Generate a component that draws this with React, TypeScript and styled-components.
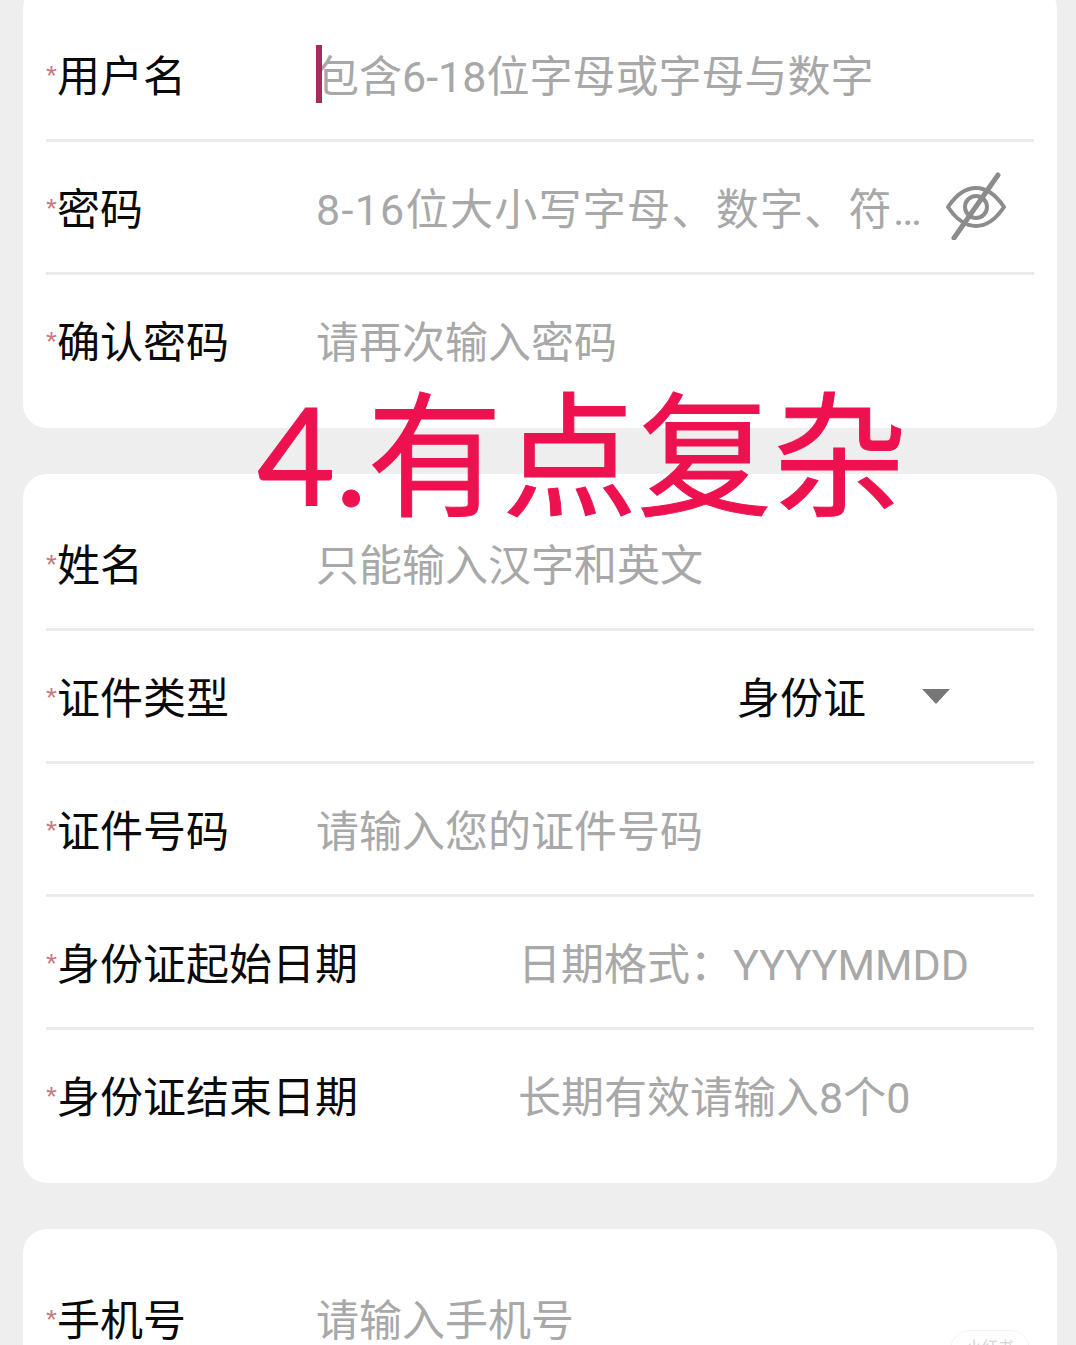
import styled, { createGlobalStyle } from "styled-components";

const GlobalStyle = createGlobalStyle`
  html, body {
    margin: 0;
    padding: 0;
    background: #eeeeee;
  }
  body {
    font-family: "Roboto", "Noto Sans CJK SC", sans-serif;
  }
`;

const Page = styled.div`
  position: relative;
  width: 1076px;
  height: 1345px;
  overflow: hidden;
  background: #eeeeee;
`;

const Stack = styled.main`
  display: flex;
  flex-direction: column;
  gap: 46px;
  margin-top: -15px;
  padding: 0 19px 0 23px;
`;

const Card = styled.section`
  background: #ffffff;
  border-radius: 24px;
  padding: 24px 23px 20px;
`;

const Row = styled.div<{ $last?: boolean }>`
  position: relative;
  display: flex;
  align-items: center;
  height: 133px;
  box-sizing: border-box;
  border-bottom: 3px solid ${(p) => (p.$last ? "transparent" : "#ebebeb")};
`;

const Label = styled.label<{ $wide?: boolean }>`
  display: flex;
  align-items: center;
  flex: 0 0 ${(p) => (p.$wide ? "474px" : "272px")};
  padding-bottom: 2px;
  font-size: 43px;
  color: #0a0a0a;
  white-space: nowrap;
`;

const Star = styled.span`
  width: 11px;
  margin-top: 6px;
  font-family: "Liberation Sans", sans-serif;
  font-size: 28px;
  color: #c9787f;
`;

const Field = styled.input<{ $spaced?: boolean }>`
  flex: 1;
  min-width: 0;
  border: 0;
  outline: 0;
  padding: 6px 0 0;
  margin-left: -2px;
  background: transparent;
  font-family: "Roboto", "Noto Sans CJK SC", sans-serif;
  font-size: 43px;
  letter-spacing: ${(p) => (p.$spaced ? "1.3px" : "0")};
  &::placeholder {
    color: #a8a8a8;
    opacity: 1;
  }
  &:placeholder-shown {
    text-overflow: ellipsis;
  }
`;

const Caret = styled.span`
  position: absolute;
  left: 270px;
  top: 36px;
  width: 6px;
  height: 58px;
  background: #a62c5e;
`;

const EyeButton = styled.button`
  flex: 0 0 auto;
  display: flex;
  margin: -2px 28px 0 16px;
  padding: 0;
  border: 0;
  background: none;
`;

const SelectBox = styled.div`
  display: flex;
  align-items: center;
  margin-left: auto;
  margin-right: 84px;
  padding-bottom: 2px;
  font-size: 43px;
  color: #0a0a0a;
`;

const Arrow = styled.span`
  width: 0;
  height: 0;
  margin-left: 56px;
  margin-top: 2px;
  border-left: 14px solid transparent;
  border-right: 14px solid transparent;
  border-top: 15px solid #777777;
`;

const Headline = styled.h1`
  position: absolute;
  left: 257px;
  top: 374px;
  margin: 0;
  font-family: "Lato", "Noto Sans CJK SC", sans-serif;
  font-size: 135px;
  font-weight: 400;
  line-height: 160px;
  color: #ee1150;
  -webkit-text-stroke: 1px #ee1150;
  white-space: nowrap;
`;

const Watermark = styled.span`
  position: absolute;
  left: 950px;
  top: 1330px;
  width: 80px;
  height: 40px;
  box-sizing: border-box;
  border: 1px solid #f2f2f2;
  border-radius: 20px;
  padding-top: 3px;
  text-align: center;
  font-size: 16px;
  color: #d4d4d4;
`;

function EyeOff() {
  return (
    <svg width="60" height="68" viewBox="0 0 60 68" fill="none" stroke="#8c8c8c" strokeLinecap="round" strokeLinejoin="round">
      <path d="M2 35C10 23 20 16 30 16s20 7 28 19c-8 12-18 19-28 19S10 47 2 35Z" strokeWidth="4" />
      <circle cx="30" cy="35" r="11" strokeWidth="4" />
      <path d="M52 3 8 66" strokeWidth="5" />
    </svg>
  );
}

export default function App() {
  return (
    <Page>
      <GlobalStyle />
      <Stack>
        <Card>
          <Row>
            <Label><Star>*</Star>用户名</Label>
            <Field placeholder="包含6-18位字母或字母与数字" />
            <Caret />
          </Row>
          <Row>
            <Label><Star>*</Star>密码</Label>
            <Field $spaced type="password" placeholder="8-16位大小写字母、数字、符号的组合" />
            <EyeButton aria-label="显示密码"><EyeOff /></EyeButton>
          </Row>
          <Row $last>
            <Label><Star>*</Star>确认密码</Label>
            <Field type="password" placeholder="请再次输入密码" />
          </Row>
        </Card>
        <Card>
          <Row>
            <Label><Star>*</Star>姓名</Label>
            <Field placeholder="只能输入汉字和英文" />
          </Row>
          <Row>
            <Label><Star>*</Star>证件类型</Label>
            <SelectBox>身份证<Arrow /></SelectBox>
          </Row>
          <Row>
            <Label><Star>*</Star>证件号码</Label>
            <Field placeholder="请输入您的证件号码" />
          </Row>
          <Row>
            <Label $wide><Star>*</Star>身份证起始日期</Label>
            <Field placeholder="日期格式：YYYYMMDD" />
          </Row>
          <Row $last>
            <Label $wide><Star>*</Star>身份证结束日期</Label>
            <Field placeholder="长期有效请输入8个0" />
          </Row>
        </Card>
        <Card>
          <Row $last>
            <Label><Star>*</Star>手机号</Label>
            <Field placeholder="请输入手机号" />
          </Row>
        </Card>
      </Stack>
      <Headline>4.有点复杂</Headline>
      <Watermark>小红书</Watermark>
    </Page>
  );
}
